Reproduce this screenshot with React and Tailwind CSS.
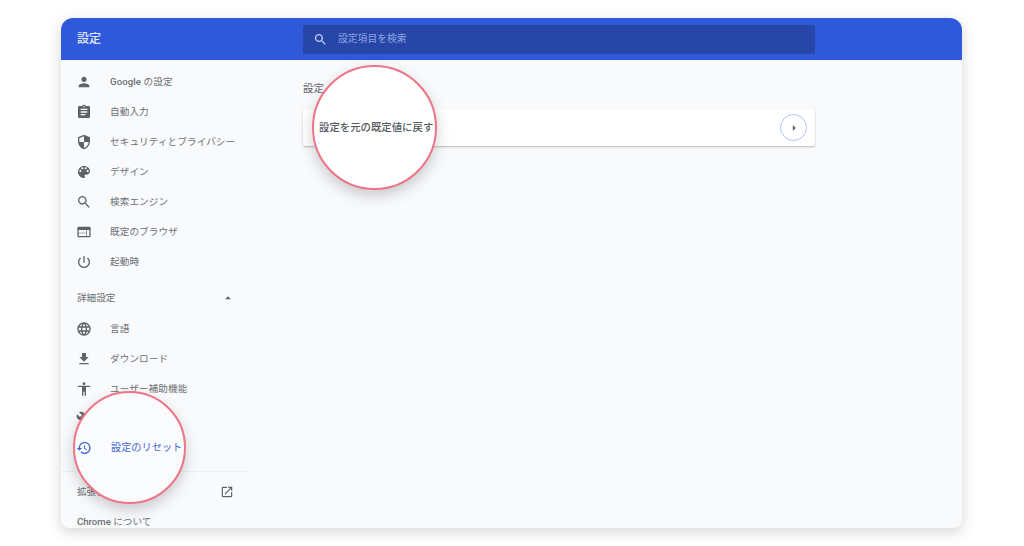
import React from 'react';

const ICONS = {
  person: 'M12 12c2.21 0 4-1.79 4-4s-1.79-4-4-4-4 1.79-4 4 1.79 4 4 4zm0 2c-2.67 0-8 1.34-8 4v2h16v-2c0-2.66-5.33-4-8-4z',
  assignment: 'M19 3h-4.18C14.4 1.84 13.3 1 12 1c-1.3 0-2.4.84-2.82 2H5c-1.1 0-2 .9-2 2v14c0 1.1.9 2 2 2h14c1.1 0 2-.9 2-2V5c0-1.1-.9-2-2-2zm-7 0c.55 0 1 .45 1 1s-.45 1-1 1-1-.45-1-1 .45-1 1-1zm2 14H7v-2h7v2zm3-4H7v-2h10v2zm0-4H7V7h10v2z',
  security: 'M12 1L3 5v6c0 5.55 3.84 10.74 9 12 5.16-1.26 9-6.45 9-12V5l-9-4zm0 10.99h7c-.53 4.12-3.28 7.79-7 8.94V12H5V6.3l7-3.11v8.8z',
  palette: 'M12 3c-4.97 0-9 4.03-9 9s4.03 9 9 9c.83 0 1.5-.67 1.5-1.5 0-.39-.15-.74-.39-1.01-.23-.26-.38-.61-.38-.99 0-.83.67-1.5 1.5-1.5H16c2.76 0 5-2.24 5-5 0-4.42-4.03-8-9-8zm-5.5 9c-.83 0-1.5-.67-1.5-1.5S5.67 9 6.5 9 8 9.67 8 10.5 7.33 12 6.5 12zm3-4C8.67 8 8 7.33 8 6.5S8.67 5 9.5 5s1.5.67 1.5 1.5S10.33 8 9.5 8zm5 0c-.83 0-1.5-.67-1.5-1.5S13.67 5 14.5 5s1.5.67 1.5 1.5S15.33 8 14.5 8zm3 4c-.83 0-1.5-.67-1.5-1.5S16.67 9 17.5 9s1.5.67 1.5 1.5-.67 1.5-1.5 1.5z',
  search: 'M15.5 14h-.79l-.28-.27C15.41 12.59 16 11.11 16 9.5 16 5.91 13.09 3 9.5 3S3 5.91 3 9.5 5.91 16 9.5 16c1.61 0 3.09-.59 4.23-1.57l.27.28v.79l5 4.99L20.49 19l-4.99-5zm-6 0C7.01 14 5 11.99 5 9.5S7.01 5 9.5 5 14 7.01 14 9.5 11.99 14 9.5 14z',
  web: 'M20 4H4c-1.1 0-1.99.9-1.99 2L2 18c0 1.1.9 2 2 2h16c1.1 0 2-.9 2-2V6c0-1.1-.9-2-2-2zm-5 14H4v-4h11v4zm0-5H4V9h11v4zm5 5h-4V9h4v9z',
  power: 'M13 3h-2v10h2V3zm4.83 2.17l-1.42 1.42C17.99 7.86 19 9.81 19 12c0 3.87-3.13 7-7 7s-7-3.13-7-7c0-2.19 1.01-4.14 2.58-5.42L6.17 5.17C4.23 6.82 3 9.26 3 12c0 4.97 4.03 9 9 9s9-4.03 9-9c0-2.74-1.23-5.18-3.17-6.83z',
  language: 'M11.99 2C6.47 2 2 6.48 2 12s4.47 10 9.99 10C17.52 22 22 17.52 22 12S17.52 2 11.99 2zm6.93 6h-2.95c-.32-1.25-.78-2.45-1.38-3.56 1.84.63 3.37 1.91 4.33 3.56zM12 4.04c.83 1.2 1.48 2.53 1.91 3.96h-3.82c.43-1.43 1.08-2.76 1.91-3.96zM4.26 14C4.1 13.36 4 12.69 4 12s.1-1.36.26-2h3.38c-.08.66-.14 1.32-.14 2 0 .68.06 1.34.14 2H4.26zm.82 2h2.95c.32 1.25.78 2.45 1.38 3.56-1.84-.63-3.37-1.9-4.33-3.56zm2.95-8H5.08c.96-1.66 2.49-2.93 4.33-3.56C8.81 5.55 8.35 6.75 8.03 8zM12 19.96c-.83-1.2-1.48-2.53-1.91-3.96h3.82c-.43 1.43-1.08 2.76-1.91 3.96zM14.34 14H9.66c-.09-.66-.16-1.32-.16-2 0-.68.07-1.35.16-2h4.68c.09.65.16 1.32.16 2 0 .68-.07 1.34-.16 2zm.25 5.56c.6-1.11 1.06-2.31 1.38-3.56h2.95c-.96 1.65-2.49 2.93-4.33 3.56zM16.36 14c.08-.66.14-1.32.14-2 0-.68-.06-1.34-.14-2h3.38c.16.64.26 1.31.26 2s-.1 1.36-.26 2h-3.38z',
  download: 'M19 9h-4V3H9v6H5l7 7 7-7zM5 18v2h14v-2H5z',
  accessibility: 'M12 2c1.1 0 2 .9 2 2s-.9 2-2 2-2-.9-2-2 .9-2 2-2zm9 7h-6v13h-2v-6h-2v6H9V9H3V7h18v2z',
  build: 'M22.7 19l-9.1-9.1c.9-2.3.4-5-1.5-6.9-2-2-5-2.4-7.4-1.3L9 6 6 9 1.6 4.7C.4 7.1.9 10.1 2.9 12.1c1.9 1.9 4.6 2.4 6.9 1.5l9.1 9.1c.4.4 1 .4 1.4 0l2.3-2.3c.5-.4.5-1.1.1-1.4z',
  restore: 'M13 3c-4.97 0-9 4.03-9 9H1l3.89 3.89.07.14L9 12H6c0-3.87 3.13-7 7-7s7 3.13 7 7-3.13 7-7 7c-1.93 0-3.68-.79-4.94-2.06l-1.42 1.42C8.27 19.99 10.51 21 13 21c4.97 0 9-4.03 9-9s-4.03-9-9-9zm-1 5v5l4.28 2.54.72-1.21-3.5-2.08V8h-1.5z',
  openNew: 'M19 19H5V5h7V3H5c-1.11 0-2 .9-2 2v14c0 1.1.89 2 2 2h14c1.1 0 2-.9 2-2v-7h-2v7zM14 3v2h3.59l-9.83 9.83 1.41 1.41L19 6.41V10h2V3h-7z',
  dropUp: 'M7 14l5-5 5 5z',
  right: 'M10 17l5-5-5-5v10z',
};

const MAIN_ITEMS = [
  { icon: 'person', label: <><span className="font-medium">Google</span> の設定</> },
  { icon: 'assignment', label: '自動入力' },
  { icon: 'security', label: 'セキュリティとプライバシー' },
  { icon: 'palette', label: 'デザイン' },
  { icon: 'search', label: '検索エンジン' },
  { icon: 'web', label: '既定のブラウザ' },
  { icon: 'power', label: '起動時' },
];

const ADVANCED_ITEMS = [
  { icon: 'language', label: '言語' },
  { icon: 'download', label: 'ダウンロード' },
  { icon: 'accessibility', label: 'ユーザー補助機能' },
  { icon: 'build', label: 'システム' },
];

const Icon = ({ name, className }) => (
  <svg viewBox="0 0 24 24" fill="currentColor" className={className}>
    <path d={ICONS[name]} />
  </svg>
);

const NavItem = ({ icon, label }) => (
  <div className="flex h-[30px] items-center gap-[18px] pl-[15px]">
    <Icon name={icon} className="h-4 w-4 shrink-0 text-[#5f6368]" />
    <span className="text-[9.6px] tracking-[0.1px] text-[#6b6f74]">{label}</span>
  </div>
);

const App = () => (
  <div className="h-[546px] w-[1024px] overflow-hidden bg-white pl-[61px] pt-[18px] font-['Roboto','Noto_Sans_CJK_JP',sans-serif]">
    <div className="relative flex h-[510px] w-[901px] flex-col overflow-hidden rounded-t-[12px] rounded-b-[8px] bg-[#f9fafc] shadow-[0_4px_14px_rgba(60,64,67,0.22)]">
      <header className="flex h-[42px] shrink-0 items-center bg-[#3059d9]">
        <h1 className="w-[242px] pl-4 text-[12px] font-medium text-[#e4eafa]">設定</h1>
        <div className="flex h-[29px] w-[512px] items-center gap-[10px] rounded-[2px] bg-[#2746a8] pl-[10px]">
          <Icon name="search" className="h-[15px] w-[15px] text-[#c3cff0]" />
          <span className="text-[9.8px] text-[#8fa3e0]">設定項目を検索</span>
        </div>
      </header>

      <div className="flex min-h-0 flex-1">
        <aside className="w-[187px] shrink-0 pt-[7px]">
          {MAIN_ITEMS.map((item) => (
            <NavItem key={item.icon} {...item} />
          ))}
          <div className="mb-px mt-[6px] flex h-[30px] items-center justify-between pl-4 pr-[13px]">
            <span className="text-[9.6px] text-[#6b6f74]">詳細設定</span>
            <Icon name="dropUp" className="h-[14px] w-[14px] text-[#5f6368]" />
          </div>
          {ADVANCED_ITEMS.map((item) => (
            <NavItem key={item.icon} {...item} />
          ))}
          <div className="h-[30px]" />
          <div className="mt-[7px] border-t border-[#eceef2] pt-[5px]">
            <div className="flex h-[30px] items-center justify-between pl-4 pr-[14px]">
              <span className="text-[9.6px] text-[#6b6f74]">拡張機能</span>
              <Icon name="openNew" className="h-[14px] w-[14px] text-[#5f6368]" />
            </div>
            <div className="flex h-[30px] items-center pl-4">
              <span className="text-[9.6px] text-[#6b6f74]"><span className="font-medium">Chrome</span> について</span>
            </div>
          </div>
        </aside>

        <main className="w-[567px] pl-[55px]">
          <h2 className="mt-[21px] h-[16px] text-[10.5px] leading-[16px] text-[#5f6368]">設定</h2>
          <div className="mt-[12px] flex h-[37px] w-[512px] items-center justify-end rounded-[2px] bg-white pr-2 shadow-[0_1px_2px_rgba(60,64,67,0.35)]">
            <div className="flex h-[27px] w-[27px] items-center justify-center rounded-full border-[1.5px] border-[#a9c4ef]">
              <Icon name="right" className="h-[14px] w-[14px] text-[#5f6368]" />
            </div>
          </div>
        </main>
      </div>

      {/* callout circles over the sidebar row and the card */}
      <div className="absolute left-[12px] top-[373px] flex h-[113px] w-[113px] items-center gap-[19px] rounded-full border-2 border-[#ee7486] bg-[#fafbfd] pl-px shadow-[0_6px_14px_rgba(60,64,67,0.25)]">
        <Icon name="restore" className="h-4 w-4 shrink-0 text-[#3f66d6]" />
        <span className="whitespace-nowrap text-[10.2px] text-[#3f66d6]">設定のリセット</span>
      </div>
      <div className="absolute left-[251px] top-[47px] flex h-[125px] w-[125px] items-center rounded-full border-2 border-[#ee7486] bg-white pl-[5px] shadow-[0_6px_14px_rgba(60,64,67,0.25)]">
        <span className="whitespace-nowrap text-[10.4px] font-medium text-[#55585c]">設定を元の既定値に戻す</span>
      </div>
    </div>
  </div>
);

export default App;
